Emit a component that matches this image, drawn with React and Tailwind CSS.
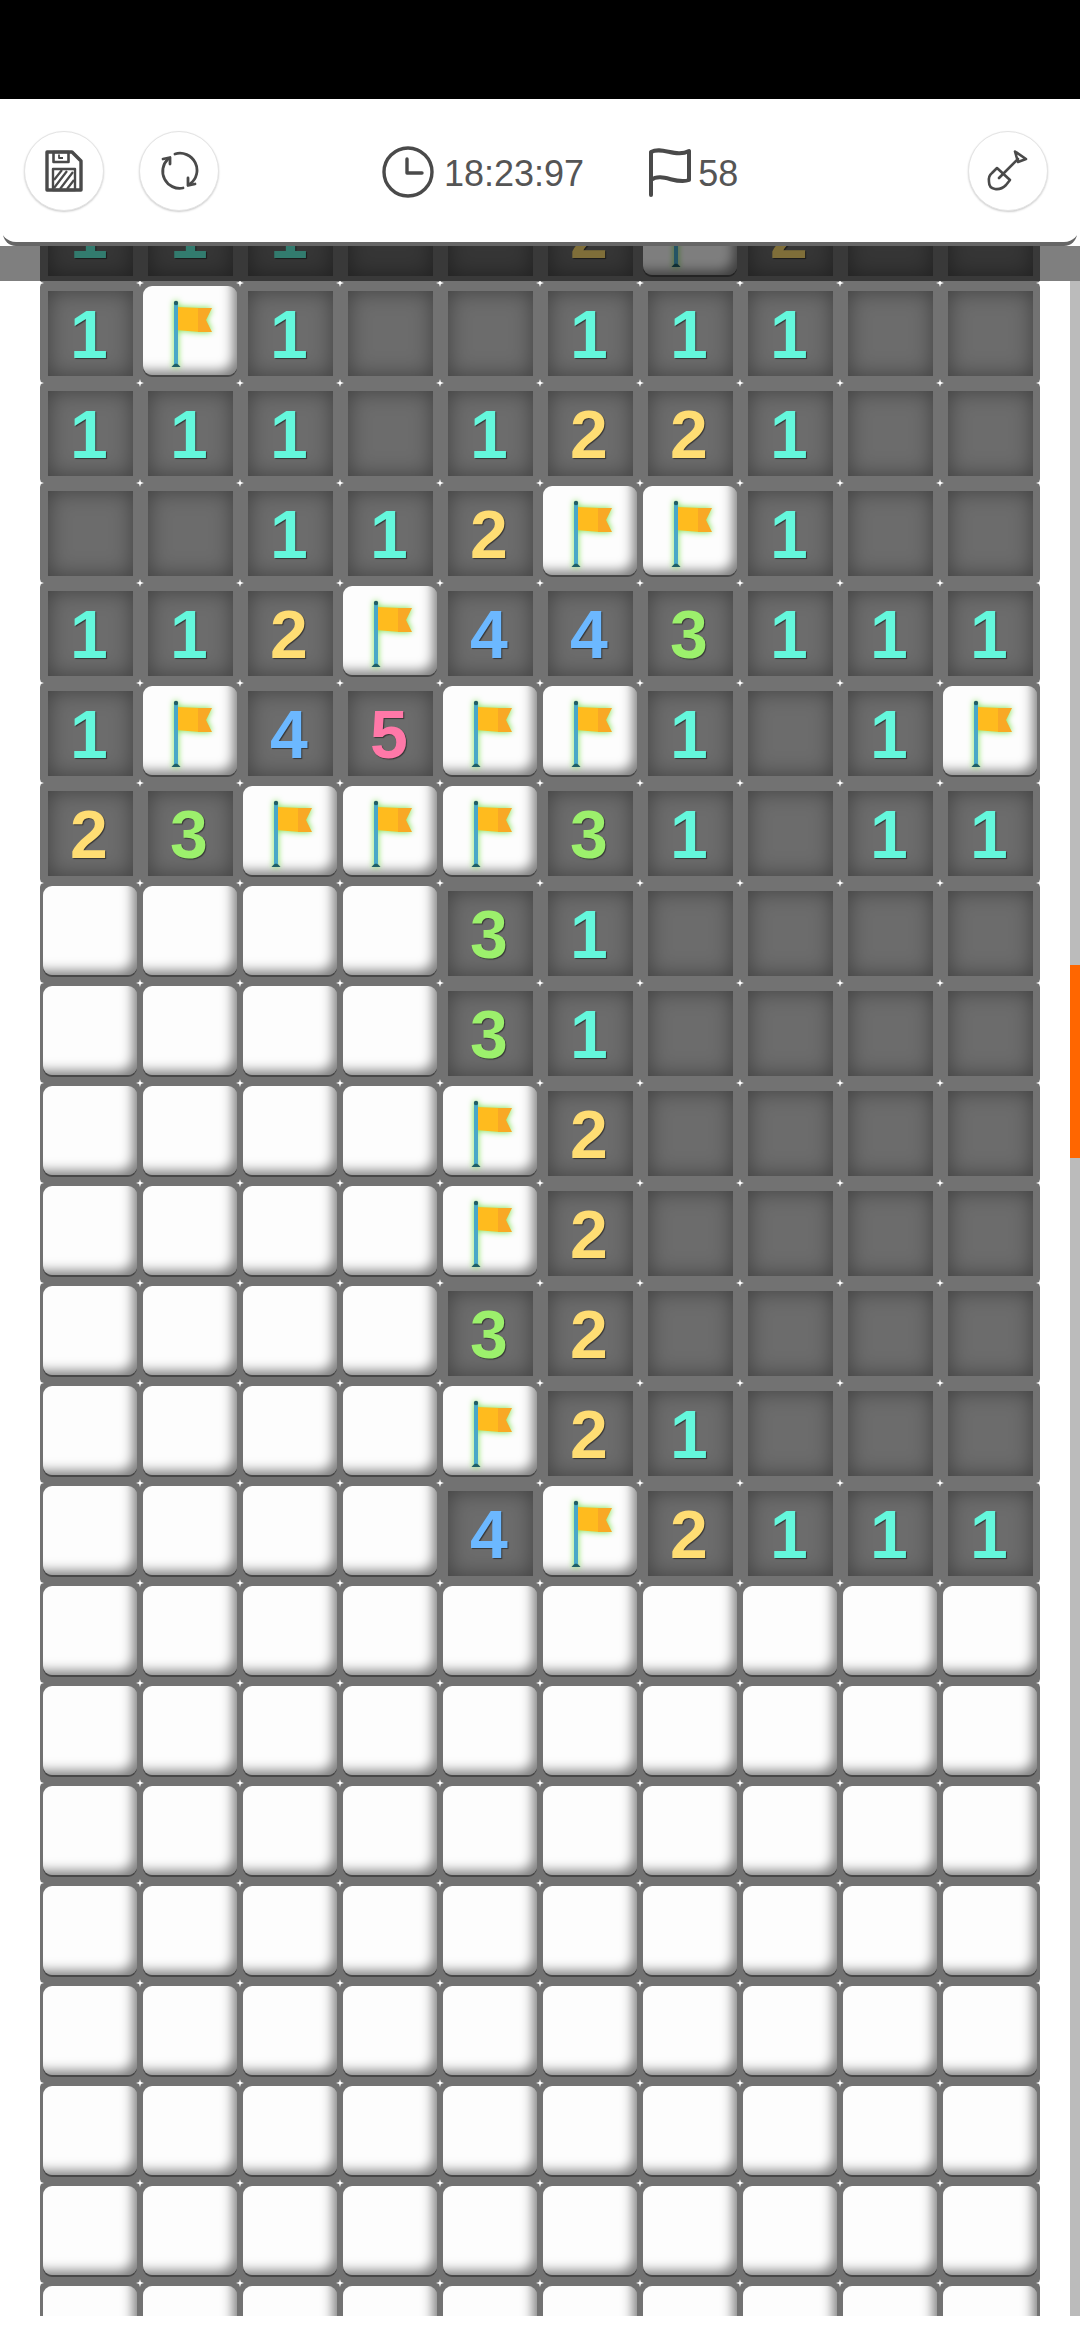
import React from 'react';

const FONT = { fontFamily: '"Liberation Sans", Arial, sans-serif' };

// . opened empty, # covered, F flag, digits opened number
const ROWS = [
  '1F1..111..',
  '111.1221..',
  '..112FF1..',
  '112F443111',
  '1F45FF1.1F',
  '23FFF31.11',
  '####31....',
  '####31....',
  '####F2....',
  '####F2....',
  '####32....',
  '####F21...',
  '####4F2111',
  '##########',
  '##########',
  '##########',
  '##########',
  '##########',
  '##########',
  '##########',
  '##########',
];

const DIGIT_COLORS = {
  1: 'text-[#64f7dc]',
  2: 'text-[#ffdd73]',
  3: 'text-[#9cf06c]',
  4: 'text-[#6cb8ff]',
  5: 'text-[#ff78a8]',
};

function Star({ className }) {
  return (
    <svg viewBox="0 0 8 8" className={`absolute w-[8px] h-[8px] z-10 ${className}`}>
      <path d="M4 0 L4.9 3.1 L8 4 L4.9 4.9 L4 8 L3.1 4.9 L0 4 L3.1 3.1 Z" fill="#fff" />
    </svg>
  );
}

function TileFlag() {
  return (
    <svg viewBox="0 0 94 89" className="w-full h-full drop-shadow-[0_0_3px_#6fe03c]">
      <path d="M33 21 L57 22 V46 L33 44 Z" fill="#ffbb1e" />
      <path d="M55 22 H69 L63 34 L69 46 H55 Z" fill="#f9a825" />
      <rect x="31" y="17" width="4" height="63" fill="#4aa8c8" />
      <circle cx="33" cy="17" r="2.2" fill="#1f5f66" />
      <path d="M28.5 81 Q33 74 37.5 81 Z" fill="#1f5f66" />
    </svg>
  );
}

function Cell({ value, last }) {
  return (
    <div className="relative w-[100px] h-[100px]">
      <Star className="-left-[4px] -top-[4px]" />
      {last && <Star className="-right-[4px] -top-[4px]" />}
      {value === '#' || value === 'F' ? (
        <div className="absolute left-[3px] top-[3px] w-[94px] h-[89px] rounded-[9px] bg-[#fdfdfd] shadow-[inset_-9px_-9px_12px_-5px_rgba(0,0,0,0.5),0_2px_0_#484848]">
          {value === 'F' && <TileFlag />}
        </div>
      ) : (
        <div className="absolute left-[8px] top-[8px] w-[85px] h-[85px] flex items-center justify-center bg-[#6c6c6c] shadow-[inset_0_0_22px_rgba(0,0,0,0.42)]">
          {value !== '.' && (
            <span className={`-ml-[3px] text-[68px] leading-none font-bold [text-shadow:1px_1px_1px_rgba(0,0,0,0.5)] ${DIGIT_COLORS[value]}`}>
              {value}
            </span>
          )}
        </div>
      )}
    </div>
  );
}

function BoardRow({ row }) {
  return (
    <div className="grid grid-cols-10 w-[1000px] h-[100px] shrink-0">
      {row.split('').map((value, i) => (
        <Cell key={i} value={value} last={i === 9} />
      ))}
    </div>
  );
}

function RoundButton({ children, className = '' }) {
  return (
    <button className={`w-[80px] h-[80px] rounded-full bg-white border border-[#e4e4e4] shadow-[0_1px_2px_rgba(0,0,0,0.2)] flex items-center justify-center ${className}`}>
      {children}
    </button>
  );
}

function SaveIcon() {
  return (
    <svg width="38" height="42" viewBox="0 0 38 42" fill="none" stroke="#4a4a4a" strokeWidth="3.4" strokeLinejoin="round">
      <path d="M2 2 H27 L36 11 V40 H2 Z" />
      <rect x="8.5" y="2" width="15" height="10" strokeWidth="2.6" />
      <path d="M14 4.5 V8 H18" strokeWidth="1.8" />
      <rect x="8" y="19" width="22" height="21" strokeWidth="2.4" />
      <path d="M9 30 L17 20 M9 38 L22 21 M15 39 L28 22 M22 39 L29 30" strokeWidth="2.2" />
    </svg>
  );
}

function ReloadIcon() {
  return (
    <svg width="40" height="40" viewBox="0 0 40 40" fill="none" stroke="#4a4a4a" strokeWidth="2.8" strokeLinecap="round" strokeLinejoin="round">
      <path d="M9 8 A17 17 0 0 0 24 37" />
      <path d="M16 3 A17 17 0 0 1 31 33" />
      <path d="M4 8 L11 6.5 L11 13" />
      <path d="M36 33 L29 34.5 L29 27" />
    </svg>
  );
}

function ShovelIcon() {
  return (
    <svg width="44" height="44" viewBox="0 0 44 44" fill="none" stroke="#4a4a4a" strokeWidth="2.6" strokeLinejoin="round" strokeLinecap="round">
      <path d="M13 29 L32 10" />
      <path d="M29 2.5 L40 10 L32 13 Z" />
      <path d="M11 19 L24 31 L20 36 Q15 41 9 40 Q3 39 3 33 Q2 27 6 24 Z" />
    </svg>
  );
}

function ClockIcon() {
  return (
    <svg width="52" height="52" viewBox="0 0 52 52" fill="none" stroke="#4a4a4a" strokeWidth="3.4" strokeLinecap="round" strokeLinejoin="round">
      <circle cx="26" cy="26" r="24" />
      <path d="M25 13 V27 H40" />
    </svg>
  );
}

function FlagIcon() {
  return (
    <svg width="44" height="50" viewBox="0 0 44 50" fill="none" stroke="#4a4a4a" strokeWidth="4" strokeLinecap="round" strokeLinejoin="round">
      <path d="M3 48 V5 C14 -1 28 11 41 4 V33 C28 38 14 25 3 33" />
    </svg>
  );
}

export default function App() {
  return (
    <div className="min-h-screen bg-white" style={FONT}>
      <div className="h-[99px] bg-black" />

      {/* Toolbar */}
      <div className="h-[147px] bg-white">
        <div className="h-[143px] flex items-center pl-[24px] pr-[32px] rounded-b-[16px] bg-white shadow-[0_7px_0_-3px_#666666]">
          <RoundButton><SaveIcon /></RoundButton>
          <RoundButton className="ml-[35px]"><ReloadIcon /></RoundButton>
          <div className="ml-[163px] mt-[3px] flex items-center text-[36px] leading-none text-[#555555]">
            <ClockIcon />
            <span className="ml-[10px] pt-[3px]">18:23:97</span>
            <span className="ml-[64px]"><FlagIcon /></span>
            <span className="ml-[6px] pt-[3px]">58</span>
          </div>
          <RoundButton className="ml-auto"><ShovelIcon /></RoundButton>
        </div>
      </div>

      {/* Row sliding under the toolbar, dimmed */}
      <div className="relative h-[35px] overflow-hidden flex items-end bg-white">
        <div className="ml-10 -mb-[2px] bg-[#727272]">
          <BoardRow row="111..2F2.." />
        </div>
        <div className="absolute inset-0 bg-black/50" />
      </div>

      <div className="flex h-[2035px]">
        <div className="ml-10 w-[1000px] pt-[2px] overflow-hidden bg-[#727272]">
          {ROWS.map((row, i) => (
            <BoardRow key={i} row={row} />
          ))}
        </div>
        <div className="ml-auto w-[10px] bg-[#bbbbbb]">
          <div className="mt-[684px] h-[193px] bg-[#ff6600]" />
        </div>
      </div>
    </div>
  );
}
